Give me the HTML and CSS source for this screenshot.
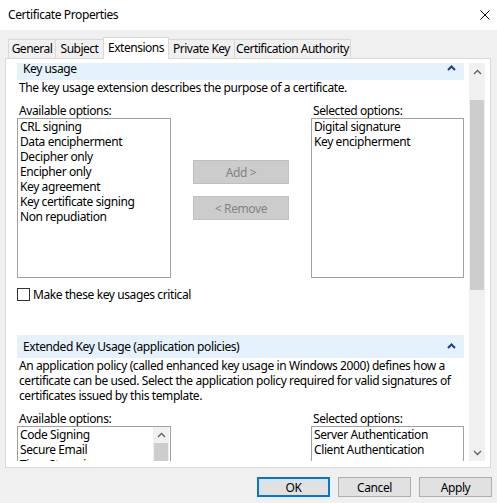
FILE: index.html
```html
<html>
    <head>
        <title>Certificate Properties</title>
        <link rel="stylesheet" href="styles.css">
    </head>
    <body>
        <div class="window">
            <div class="titlebar">
                <span class="title">Certificate Properties</span>
                <svg class="close" width="10" height="10" viewBox="0 0 10 10">
                    <path d="M0.5 0.5 L9.5 9.5 M9.5 0.5 L0.5 9.5" stroke="#000" stroke-width="1" fill="none"/>
                </svg>
            </div>
            <div class="tabs">
                <div class="tab tab-general">General</div>
                <div class="tab tab-subject">Subject</div>
                <div class="tab tab-ext active">Extensions</div>
                <div class="tab tab-key">Private Key</div>
                <div class="tab tab-ca">Certification Authority</div>
            </div>
            <div class="panel">
                <div class="viewport">
                    <div class="content">
                        <!-- key usage -->
                        <div class="section first">
                            <div class="section-header">
                                <span>Key usage</span>
                                <svg class="chevron" width="9" height="6" viewBox="0 0 9 6">
                                    <path d="M1 5 L4.5 1.5 L8 5" stroke="#1b3d8c" stroke-width="2" fill="none"/>
                                </svg>
                            </div>
                            <p class="desc">The key usage extension describes the purpose of a certificate.</p>
                            <div class="picker">
                                <div class="col">
                                    <div class="label">Available options:</div>
                                    <div class="listbox">
                                        <div class="items">
                                            <div>CRL signing</div>
                                            <div>Data encipherment</div>
                                            <div>Decipher only</div>
                                            <div>Encipher only</div>
                                            <div>Key agreement</div>
                                            <div>Key certificate signing</div>
                                            <div>Non repudiation</div>
                                        </div>
                                    </div>
                                </div>
                                <div class="actions">
                                    <button disabled>Add &gt;</button>
                                    <button disabled>&lt; Remove</button>
                                </div>
                                <div class="col">
                                    <div class="label">Selected options:</div>
                                    <div class="listbox">
                                        <div class="items">
                                            <div>Digital signature</div>
                                            <div>Key encipherment</div>
                                        </div>
                                    </div>
                                </div>
                            </div>
                            <div class="check">
                                <span class="box"></span>
                                <span>Make these key usages critical</span>
                            </div>
                        </div>
                        <!-- extended key usage -->
                        <div class="section">
                            <div class="section-header">
                                <span>Extended Key Usage (application policies)</span>
                                <svg class="chevron" width="9" height="6" viewBox="0 0 9 6">
                                    <path d="M1 5 L4.5 1.5 L8 5" stroke="#1b3d8c" stroke-width="2" fill="none"/>
                                </svg>
                            </div>
                            <p class="desc">An application policy (called enhanced key usage in Windows 2000) defines how a<br>certificate can be used. Select the application policy required for valid signatures of<br>certificates issued by this template.</p>
                            <div class="picker">
                                <div class="col">
                                    <div class="label">Available options:</div>
                                    <div class="listbox">
                                        <div class="items">
                                            <div>Code Signing</div>
                                            <div>Secure Email</div>
                                            <div>Time Stamping</div>
                                            <div>Microsoft Trust List Signing</div>
                                        </div>
                                        <div class="mini-scroll">
                                            <div class="arrow">
                                                <svg width="9" height="6" viewBox="0 0 9 6"><path d="M1 5 L4.5 1.5 L8 5" stroke="#606060" stroke-width="1.3" fill="none"/></svg>
                                            </div>
                                            <div class="thumb"></div>
                                        </div>
                                    </div>
                                </div>
                                <div class="actions"></div>
                                <div class="col">
                                    <div class="label">Selected options:</div>
                                    <div class="listbox">
                                        <div class="items">
                                            <div>Server Authentication</div>
                                            <div>Client Authentication</div>
                                        </div>
                                    </div>
                                </div>
                            </div>
                        </div>
                    </div>
                </div>
                <div class="scrollbar">
                    <div class="arrow">
                        <svg width="9" height="6" viewBox="0 0 9 6"><path d="M1 5 L4.5 1.5 L8 5" stroke="#606060" stroke-width="1.3" fill="none"/></svg>
                    </div>
                    <div class="track">
                        <div class="thumb"></div>
                    </div>
                    <div class="arrow">
                        <svg width="9" height="6" viewBox="0 0 9 6"><path d="M1 1 L4.5 4.5 L8 1" stroke="#606060" stroke-width="1.3" fill="none"/></svg>
                    </div>
                </div>
            </div>
            <div class="footer">
                <button class="btn default">OK</button>
                <button class="btn">Cancel</button>
                <button class="btn">Apply</button>
            </div>
        </div>
    </body>
</html>
```

FILE: styles.css
```css
body {
    margin: 0;
    background: #F0F0F0;
    font-family: "Noto Sans", sans-serif;
    font-size: 12px;
    letter-spacing: -0.4px;
    color: #000;
}
.window {
    width: 497px;
    height: 503px;
    overflow: hidden;
}
/* Title bar */
.titlebar {
    height: 29px;
    background: #FFFFFF;
    display: flex;
    align-items: center;
    justify-content: space-between;
    padding: 0 7px 1px 8px;
}
/* Tabs */
.tabs {
    display: flex;
    align-items: flex-end;
    height: 21px;
    margin-top: 7px;
    padding-left: 8px;
}
.tab {
    height: 19px;
    line-height: 18px;
    text-align: center;
    white-space: nowrap;
    letter-spacing: -0.5px;
    border: 1px solid #D9D9D9;
    border-bottom: none;
    border-right: none;
    box-sizing: border-box;
    background: #F0F0F0;
}
.tab-general { width: 47px; }
.tab-subject { width: 48px; }
.tab-ext { width: 66px; }
.tab-key { width: 65px; }
.tab-ca { width: 117px; }
.tab:last-child {
    border-right: 1px solid #D9D9D9;
}
.tab.active {
    height: 22px;
    line-height: 19px;
    margin-bottom: -1px;
    background: #FFFFFF;
    border-right: 1px solid #D9D9D9;
    position: relative;
    z-index: 1;
}
.tab.active + .tab {
    border-left: none;
}
/* Tab page */
.panel {
    margin-left: 5px;
    width: 486px;
    height: 410px;
    box-sizing: border-box;
    background: #FFFFFF;
    border: 1px solid #D9D9D9;
    padding: 4px 5px 6px 0;
    display: flex;
}
.viewport {
    flex: 1;
    overflow: hidden;
    padding: 0 5px 0 11px;
}
.content {
    margin-top: -6px;
}
.section-header {
    height: 23px;
    background: #E5F1FB;
    display: flex;
    align-items: center;
    justify-content: space-between;
    padding: 0 8px 0 6px;
    white-space: nowrap;
}
.chevron {
    margin-top: -1px;
}
.desc {
    margin: 0;
    line-height: 15px;
    padding-left: 2px;
    white-space: nowrap;
}
.picker {
    display: flex;
    justify-content: space-between;
    margin-top: 8px;
}
.col {
    width: 154px;
}
.col + .actions + .col {
    width: 153px;
}
.label {
    line-height: 15px;
    padding-left: 2px;
    white-space: nowrap;
}
.listbox {
    height: 160px;
    box-sizing: border-box;
    border: 1px solid #A0A0A0;
    display: flex;
}
.items {
    flex: 1;
    padding: 0 2px;
    line-height: 15px;
    white-space: nowrap;
    overflow: hidden;
}
.actions {
    width: 96px;
    padding-top: 57px;
    display: flex;
    flex-direction: column;
    gap: 12px;
}
.actions button {
    height: 24px;
    font-family: inherit;
    font-size: 12px;
    letter-spacing: inherit;
    background: #CCCCCC;
    border: 1px solid #BFBFBF;
    color: #838383;
}
.check {
    display: flex;
    align-items: center;
    height: 13px;
    margin-top: 10px;
    gap: 3px;
    white-space: nowrap;
}
.check .box {
    width: 13px;
    height: 13px;
    box-sizing: border-box;
    border: 1px solid #333333;
    background: #FFFFFF;
}
.section.first {
    margin-bottom: 34px;
}
/* mini scrollbar inside a list */
.mini-scroll {
    width: 16px;
    margin-right: 1px;
    background: #F0F0F0;
    display: flex;
    flex-direction: column;
}
.mini-scroll .arrow {
    height: 16px;
    display: flex;
    align-items: center;
    justify-content: center;
}
.mini-scroll .thumb {
    flex: 1;
    background: #CDCDCD;
    margin: 0 1px;
}
/* page scrollbar */
.scrollbar {
    width: 16px;
    background: #F0F0F0;
    display: flex;
    flex-direction: column;
}
.scrollbar .arrow {
    height: 17px;
    display: flex;
    align-items: center;
    justify-content: center;
}
.scrollbar .track {
    flex: 1;
    padding-top: 20px;
}
.scrollbar .thumb {
    height: 190px;
    background: #CDCDCD;
    margin: 0 1px;
}
/* dialog buttons */
.footer {
    display: flex;
    justify-content: flex-end;
    gap: 8px;
    padding: 9px 5px 0 0;
}
.btn {
    width: 73px;
    height: 20px;
    font-family: inherit;
    font-size: 12px;
    letter-spacing: inherit;
    background: #E1E1E1;
    border: 1px solid #ADADAD;
    padding: 0;
}
.btn.default {
    border: 2px solid #0078D7;
}
```
